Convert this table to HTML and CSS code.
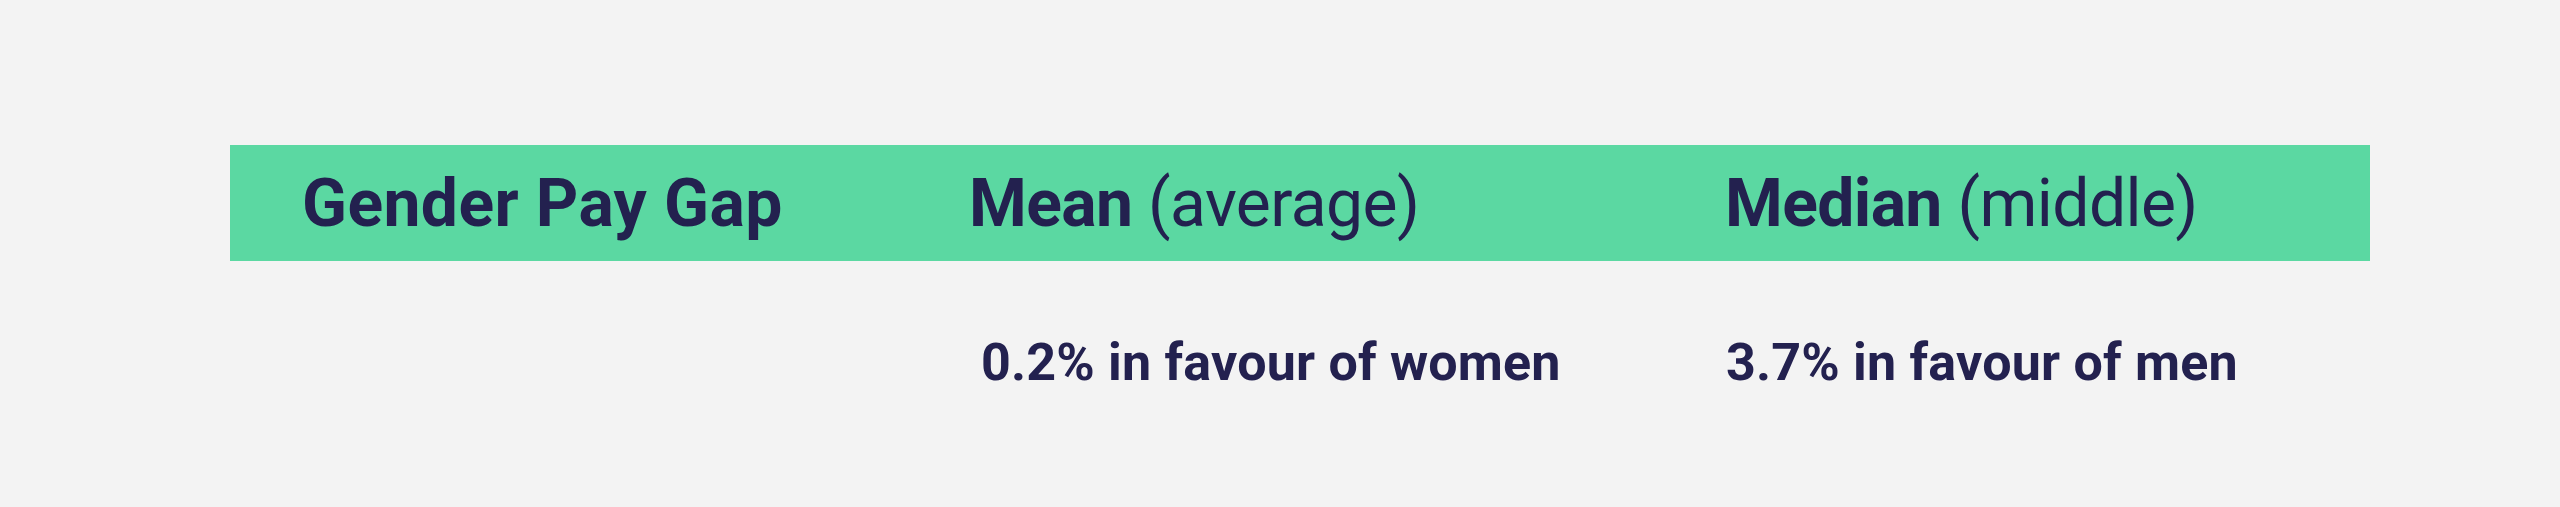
FILE: index.html
```html
<!DOCTYPE html>
<html lang="en">
<head>
<meta charset="utf-8">
<title>Gender Pay Gap</title>
<link rel="stylesheet" href="styles.css">
</head>
<body>
<main class="page">
  <section class="gap-table">
    <div class="row row-head">
      <div class="cell cell-title">Gender Pay Gap</div>
      <div class="cell cell-mean"><strong>Mean</strong> (average)</div>
      <div class="cell cell-median"><strong>Median</strong> (middle)</div>
    </div>
    <div class="row row-values">
      <div class="cell cell-title"></div>
      <div class="cell cell-mean value-mean">0.2% in favour of women</div>
      <div class="cell cell-median value-median">3.7% in favour of men</div>
    </div>
  </section>
</main>
</body>
</html>
```

FILE: styles.css
```css
* { box-sizing: border-box; }
html, body {
  margin: 0;
  padding: 0;
  background: #f3f3f3;
}
body {
  font-family: Roboto, "Liberation Sans", Arial, sans-serif;
  color: #23214f;
  width: 2560px;
  height: 507px;
  overflow: hidden;
}
.page {
  padding: 145px 190px 0 230px;
}
.gap-table {
  display: flex;
  flex-direction: column;
  gap: 62px;
}
.row {
  display: grid;
  grid-template-columns: 739px 756px 1fr;
}
.row-head {
  background: #5bd8a2;
  height: 116px;
  font-size: 66px;
  line-height: 116px;
  letter-spacing: -0.6px;
  font-weight: 400;
  white-space: nowrap;
  padding-top: 1px;
}
.row-head strong { font-weight: 700; }
.row-head .cell-title {
  font-weight: 700;
  letter-spacing: 0.4px;
  padding-left: 72px;
}
.row-values {
  font-size: 52px;
  line-height: 80px;
  font-weight: 700;
  letter-spacing: 0.2px;
  white-space: nowrap;
}
.value-mean { padding-left: 12px; }
.value-median { padding-left: 1px; }
```
